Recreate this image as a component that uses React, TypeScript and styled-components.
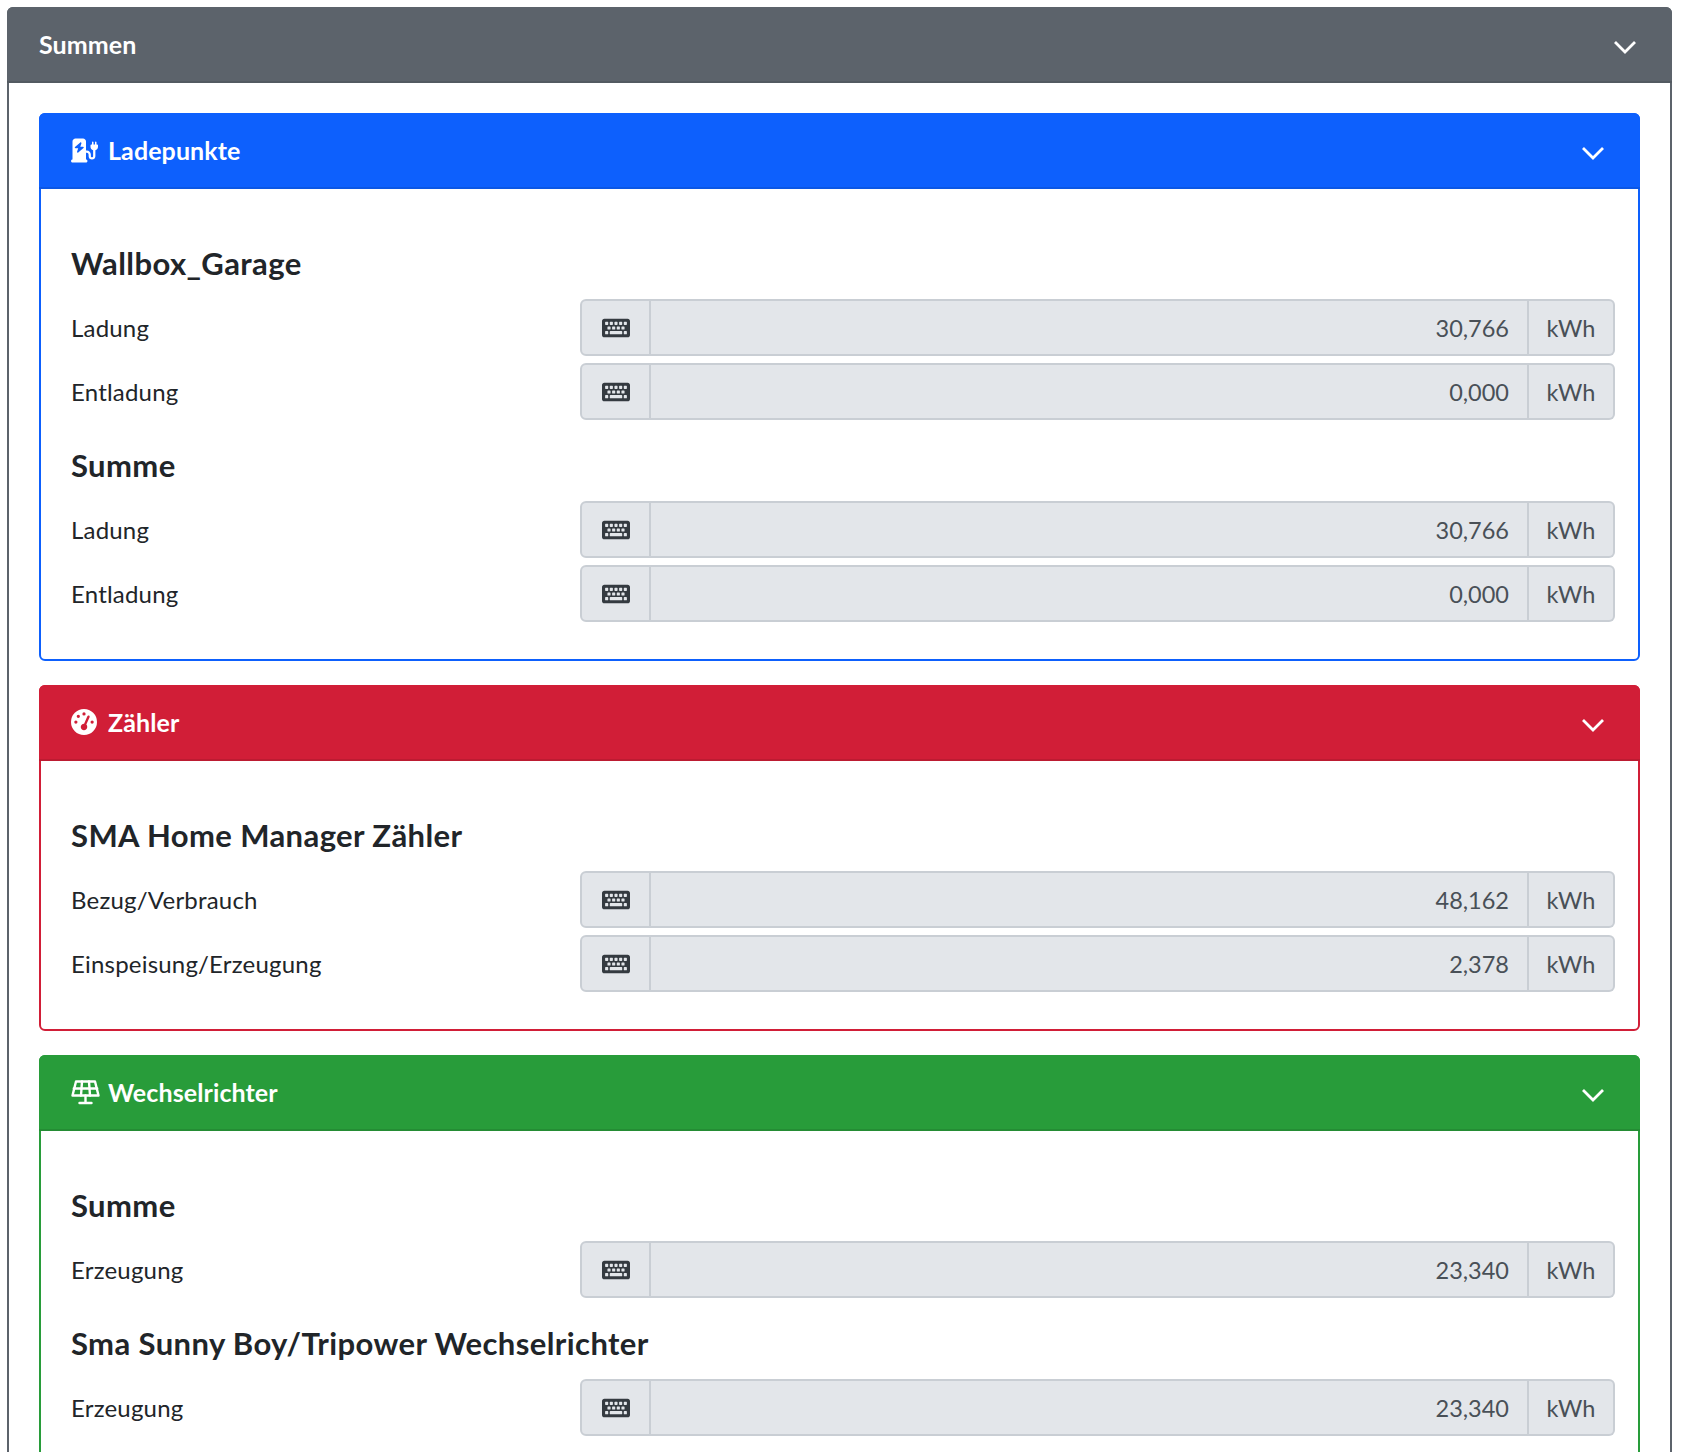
import { ReactNode } from 'react';
import styled, { createGlobalStyle } from 'styled-components';
import { FaKeyboard } from 'react-icons/fa';
import { FaChargingStation, FaGaugeHigh } from 'react-icons/fa6';

const GlobalStyle = createGlobalStyle`
  html, body {
    margin: 0;
    padding: 0;
    background: #fff;
    color: #212529;
    font-family: Lato, "Open Sans", sans-serif;
    font-size: 24px;
  }
`;

type Row = { label: string; value: string };
type Group = { title: string; rows: Row[] };
type Section = { name: string; color: string; edge: string; icon: ReactNode; groups: Group[] };

function SolarIcon() {
  return (
    <svg width="29" height="25" viewBox="0 0 29 25" fill="none" stroke="currentColor" strokeWidth="2.4" strokeLinejoin="round" strokeLinecap="round">
      <path d="M5 1.500h19l3.500 14h-26z" />
      <path d="M2.800 8.500h23.400M11 1.500l-1 14M18 1.500l1 14M14.500 15.500v7M8.500 23h12" />
    </svg>
  );
}

const sections: Section[] = [
  {
    name: 'Ladepunkte',
    color: '#0d60fd',
    edge: '#0b57e4',
    icon: <FaChargingStation size={27} />,
    groups: [
      {
        title: 'Wallbox_Garage',
        rows: [
          { label: 'Ladung', value: '30,766' },
          { label: 'Entladung', value: '0,000' },
        ],
      },
      {
        title: 'Summe',
        rows: [
          { label: 'Ladung', value: '30,766' },
          { label: 'Entladung', value: '0,000' },
        ],
      },
    ],
  },
  {
    name: 'Zähler',
    color: '#d11e37',
    edge: '#bc1b31',
    icon: <FaGaugeHigh size={26} />,
    groups: [
      {
        title: 'SMA Home Manager Zähler',
        rows: [
          { label: 'Bezug/Verbrauch', value: '48,162' },
          { label: 'Einspeisung/Erzeugung', value: '2,378' },
        ],
      },
    ],
  },
  {
    name: 'Wechselrichter',
    color: '#289c3a',
    edge: '#248c34',
    icon: <SolarIcon />,
    groups: [
      {
        title: 'Summe',
        rows: [{ label: 'Erzeugung', value: '23,340' }],
      },
      {
        title: 'Sma Sunny Boy/Tripower Wechselrichter',
        rows: [{ label: 'Erzeugung', value: '23,340' }],
      },
    ],
  },
];

function Chevron() {
  return (
    <ChevronIcon viewBox="0 0 22 14" fill="none" stroke="currentColor" strokeWidth="2.8">
      <path d="M1 2l10 10L21 2" />
    </ChevronIcon>
  );
}

function App() {
  return (
    <Page>
      <GlobalStyle />
      <Card $color="#5c636b">
        <CardHeader $color="#5c636b" $edge="#535a61">
          <HeaderTitle>Summen</HeaderTitle>
          <Chevron />
        </CardHeader>
        <OuterBody>
          {sections.map((section) => (
            <Card key={section.name} $color={section.color}>
              <CardHeader $color={section.color} $edge={section.edge}>
                <HeaderTitle>
                  <IconSlot>{section.icon}</IconSlot>
                  {section.name}
                </HeaderTitle>
                <Chevron />
              </CardHeader>
              <InnerBody>
                {section.groups.map((group) => (
                  <div key={group.title}>
                    <GroupTitle>{group.title}</GroupTitle>
                    {group.rows.map((row) => (
                      <FormRow key={row.label}>
                        <Label>{row.label}</Label>
                        <InputGroup>
                          <Addon $side="left">
                            <FaKeyboard size={28} color="#343a40" />
                          </Addon>
                          <ValueField>{row.value}</ValueField>
                          <Addon $side="right">kWh</Addon>
                        </InputGroup>
                      </FormRow>
                    ))}
                  </div>
                ))}
              </InnerBody>
            </Card>
          ))}
        </OuterBody>
      </Card>
    </Page>
  );
}

export default App;

const Page = styled.div`
  height: 1452px;
  overflow: hidden;
  padding: 7px 20px 0 7px;
  box-sizing: border-box;
`;

const Card = styled.section<{ $color: string }>`
  border: 2px solid ${(p) => p.$color};
  border-radius: 6px;
  background: #fff;
`;

const CardHeader = styled.header<{ $color: string; $edge: string }>`
  height: 76px;
  box-sizing: border-box;
  margin: -2px -2px 0;
  padding: 0 36px 0 32px;
  display: flex;
  align-items: center;
  justify-content: space-between;
  background: ${(p) => p.$color};
  border-bottom: 2px solid ${(p) => p.$edge};
  border-radius: 6px 6px 0 0;
  color: #fff;
`;

const HeaderTitle = styled.h2`
  margin: 0;
  display: flex;
  align-items: center;
  font-size: 25px;
  font-weight: 700;
  letter-spacing: 0.1px;
`;

const IconSlot = styled.span`
  width: 37px;
  display: flex;
  align-items: center;
`;

const ChevronIcon = styled.svg`
  width: 22px;
  height: 14px;
  margin-top: 5px;
`;

const OuterBody = styled.div`
  padding: 30px 30px 0;
  display: flex;
  flex-direction: column;
  gap: 24px;
`;

const InnerBody = styled.div`
  padding: 36px 23px 30px 30px;
`;

const GroupTitle = styled.h3`
  margin: 0;
  height: 74px;
  padding-top: 3px;
  padding-bottom: 2px;
  box-sizing: border-box;
  display: flex;
  align-items: center;
  font-size: 31px;
  font-weight: 700;
  letter-spacing: 0.4px;
`;

const FormRow = styled.div`
  display: grid;
  grid-template-columns: 509px 1fr;
  align-items: center;
  margin-bottom: 7px;
`;

const Label = styled.label`
  font-size: 24px;
  letter-spacing: 0.2px;
`;

const InputGroup = styled.div`
  display: flex;
  height: 57px;
  color: #495057;
  font-size: 23.5px;
`;

const Addon = styled.div<{ $side: 'left' | 'right' }>`
  width: ${(p) => (p.$side === 'left' ? '71px' : '86px')};
  box-sizing: border-box;
  display: flex;
  align-items: center;
  justify-content: center;
  background: #e3e6ea;
  border: 2px solid #c9ced4;
  border-radius: ${(p) => (p.$side === 'left' ? '6px 0 0 6px' : '0 6px 6px 0')};
  ${(p) => (p.$side === 'right' ? 'border-left: 0;' : '')}
`;

const ValueField = styled.div`
  flex: 1;
  box-sizing: border-box;
  display: flex;
  align-items: center;
  justify-content: flex-end;
  padding-right: 18px;
  background: #e3e6ea;
  border: 2px solid #c9ced4;
  border-left: 0;
`;
